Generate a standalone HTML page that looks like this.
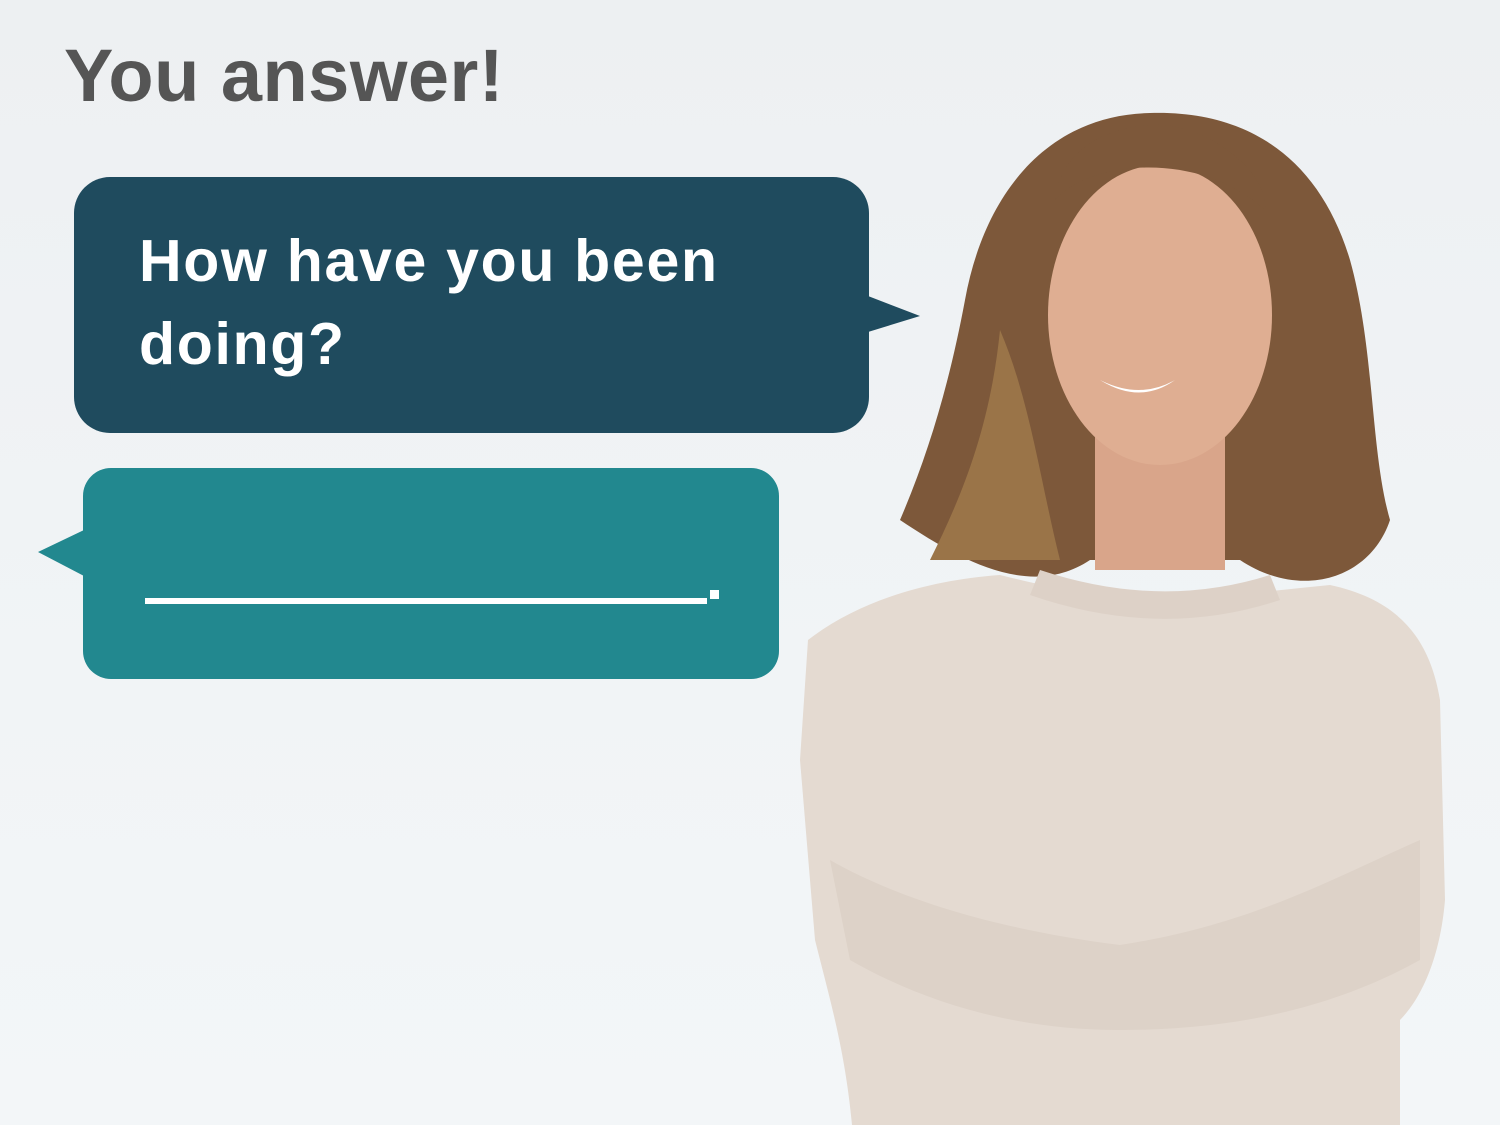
<!DOCTYPE html>
<html><head><style>
html,body{margin:0;padding:0}
body{width:1500px;height:1125px;overflow:hidden;position:relative;background:linear-gradient(180deg,#edf0f2 0%,#f1f4f6 60%,#f3f6f8 100%);font-family:"Liberation Sans",Arial,sans-serif}
.t{position:absolute;left:64px;top:33px;font-size:74px;font-weight:bold;color:#555;letter-spacing:0.5px}
svg{position:absolute;left:0;top:0}
.q{position:absolute;left:139px;top:220px;font-size:59px;font-weight:bold;color:#fff;line-height:83px;letter-spacing:1.7px}
</style></head><body>
<svg width="1500" height="1125">
<path d="M1150 113 C1050 115 985 190 965 300 C950 380 930 450 900 520 C960 560 1030 600 1090 560 L1240 560 C1300 600 1370 580 1390 520 C1370 450 1375 350 1350 260 C1320 160 1250 110 1150 113Z" fill="#7d583a"/>
<path d="M1000 330 C990 430 960 500 930 560 L1060 560 C1040 480 1030 400 1000 330Z" fill="#9a7448"/>
<rect x="1095" y="420" width="130" height="150" fill="#d9a58a"/>
<ellipse cx="1160" cy="315" rx="112" ry="150" fill="#dfae92"/>
<path d="M1055 200 C1090 160 1200 150 1265 210 C1270 170 1200 120 1150 125 C1090 130 1060 160 1055 200Z" fill="#7d583a"/>
<path d="M1100 380 Q1140 400 1175 380 Q1140 405 1100 380Z" fill="#fff"/>
<path d="M808 640 C860 600 930 580 1000 575 C1060 590 1110 600 1170 598 C1230 596 1280 590 1330 585 C1400 600 1430 640 1440 700 L1445 900 C1440 960 1420 1000 1400 1020 L1400 1125 L852 1125 C845 1050 830 1000 815 940 L800 760 Z" fill="#e4dad1"/>
<path d="M1040 570 Q1160 610 1270 575 L1280 600 Q1160 640 1030 595Z" fill="#ddd1c7"/>
<path d="M830 860 C900 900 1000 930 1120 945 C1250 925 1330 880 1420 840 L1420 960 C1330 1010 1230 1030 1120 1030 C1010 1030 920 1000 850 960Z" fill="#ddd2c8"/>
<path d="M868 296 L920 316 L868 332Z" fill="#1f4b5e"/>
<rect x="74" y="177" width="795" height="256" rx="36" fill="#1f4b5e"/>
<path d="M84 530 L38 552 L84 576Z" fill="#22888f"/>
<rect x="83" y="468" width="696" height="211" rx="28" fill="#22888f"/>
<rect x="145" y="598" width="562" height="6" fill="#fff"/>
<rect x="710" y="590" width="9" height="9" fill="#fff"/>
</svg>
<div class="t">You answer!</div>
<div class="q">How have you been<br>doing?</div>
</body></html>
